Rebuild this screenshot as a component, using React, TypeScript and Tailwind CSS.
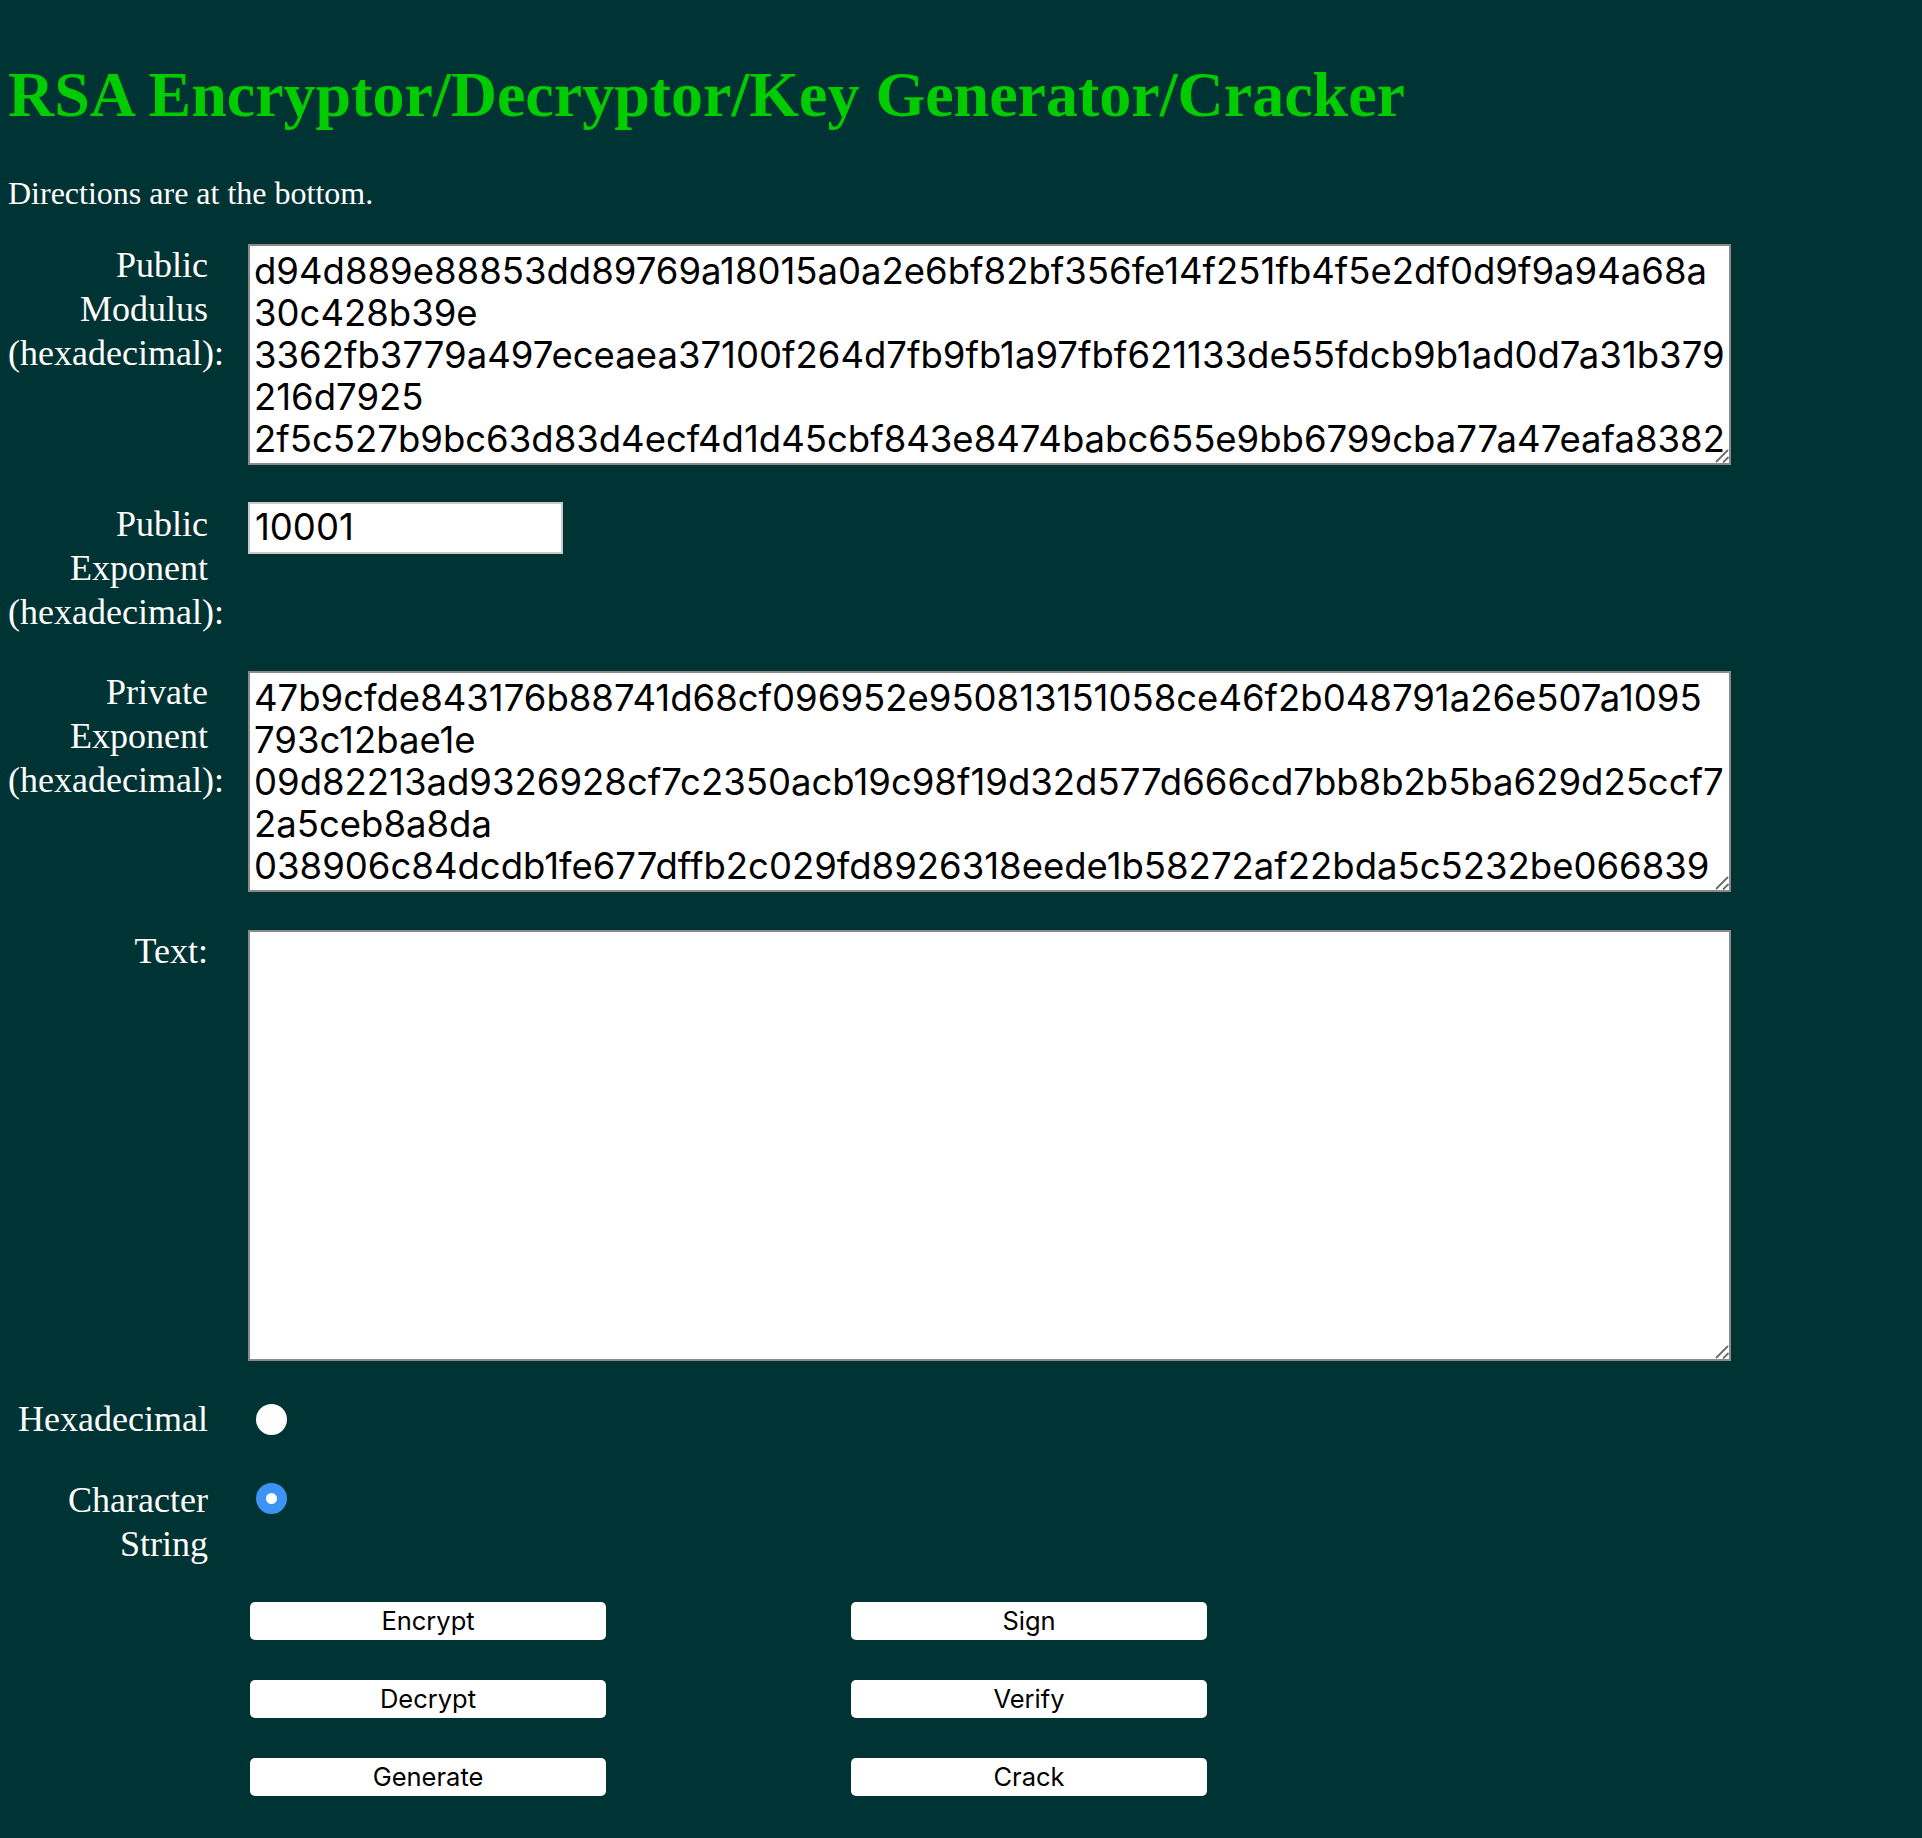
import React from "react";

const modulus = [
  "d94d889e88853dd89769a18015a0a2e6bf82bf356fe14f251fb4f5e2df0d9f9a94a68a",
  "30c428b39e",
  "3362fb3779a497eceaea37100f264d7fb9fb1a97fbf621133de55fdcb9b1ad0d7a31b379",
  "216d7925",
  "2f5c527b9bc63d83d4ecf4d1d45cbf843e8474babc655e9bb6799cba77a47eafa8382",
].join("\n");

const priv = [
  "47b9cfde843176b88741d68cf096952e950813151058ce46f2b048791a26e507a1095",
  "793c12bae1e",
  "09d82213ad9326928cf7c2350acb19c98f19d32d577d666cd7bb8b2b5ba629d25ccf7",
  "2a5ceb8a8da",
  "038906c84dcdb1fe677dffb2c029fd8926318eede1b58272af22bda5c5232be066839",
].join("\n");

function Label({ lines, last }: { lines: string[]; last?: string }) {
  return (
    <div className="w-[200px] shrink-0 text-right text-[36px] leading-[44px]">
      {lines.map((l) => (
        <div key={l}>{l}</div>
      ))}
      {last && <div className="whitespace-nowrap text-left">{last}</div>}
    </div>
  );
}

function Area({ value, h }: { value: string; h: string }) {
  return (
    <div className="relative mt-[1px] w-[1483px]">
      <textarea
        readOnly
        wrap="off"
        value={value}
        className={`block w-[1483px] ${h} resize-none overflow-hidden whitespace-pre border-2 border-[#8a8a8a] bg-white pl-[4px] pt-[4px] font-['Inter',sans-serif] text-[36.5px] leading-[42px] text-black outline-none`}
      />
      <svg
        className="pointer-events-none absolute bottom-0 right-0 h-[16px] w-[16px]"
        viewBox="0 0 16 16"
      >
        <line x1="1" y1="13" x2="13" y2="1" stroke="#6b6b6b" strokeWidth="1.8" />
        <line x1="8" y1="13.5" x2="13.5" y2="8" stroke="#6b6b6b" strokeWidth="1.8" />
      </svg>
    </div>
  );
}

function Btn({ children }: { children: string }) {
  return (
    <button className="h-[38px] w-[356px] rounded-[5px] bg-white font-['Inter',sans-serif] text-[25.5px] leading-[38px] text-black">
      {children}
    </button>
  );
}

export default function App() {
  return (
    <div className="min-h-screen bg-[#003333] pl-[8px] pt-[59px] pb-[40px] font-['Liberation_Serif','Times_New_Roman',serif] text-white">
      <h1 className="text-[64px] font-bold leading-[71px] text-[#00cc00]">
        RSA Encryptor/Decryptor/Key Generator/Cracker
      </h1>
      <p className="mt-[45px] text-[32px] leading-[36px]">Directions are at the bottom.</p>
      <div className="mt-[32px] flex flex-col gap-[36.5px]">
        <div className="flex">
          <Label lines={["Public", "Modulus"]} last="(hexadecimal):" />
          <div className="ml-[40px]">
            <Area value={modulus} h="h-[221px]" />
          </div>
        </div>
        <div className="flex">
          <Label lines={["Public", "Exponent"]} last="(hexadecimal):" />
          <div className="ml-[40px]">
            <input
              readOnly
              value="10001"
              className="block h-[52px] w-[315px] border-2 border-[#c9c9c9] bg-white pl-[5px] font-['Inter',sans-serif] text-[36.5px] text-black outline-none"
            />
          </div>
        </div>
        <div className="flex">
          <Label lines={["Private", "Exponent"]} last="(hexadecimal):" />
          <div className="ml-[40px]">
            <Area value={priv} h="h-[221px]" />
          </div>
        </div>
        <div className="flex">
          <Label lines={["Text:"]} />
          <div className="ml-[40px]">
            <Area value="" h="h-[431px]" />
          </div>
        </div>
        <div className="flex">
          <Label lines={["Hexadecimal"]} />
          <div className="ml-[48px] mt-[7px]">
            <div className="h-[31px] w-[31px] rounded-full bg-white" />
          </div>
        </div>
        <div className="flex">
          <Label lines={["Character", "String"]} />
          <div className="ml-[48px] mt-[5px]">
            <div className="flex h-[31px] w-[31px] items-center justify-center rounded-full bg-[#3b94f4]">
              <div className="h-[11px] w-[11px] rounded-full bg-white" />
            </div>
          </div>
        </div>
        <div className="ml-[242px] grid w-max grid-cols-[356px_356px] gap-x-[245px] gap-y-[40px]">
          <Btn>Encrypt</Btn>
          <Btn>Sign</Btn>
          <Btn>Decrypt</Btn>
          <Btn>Verify</Btn>
          <Btn>Generate</Btn>
          <Btn>Crack</Btn>
        </div>
      </div>
    </div>
  );
}
